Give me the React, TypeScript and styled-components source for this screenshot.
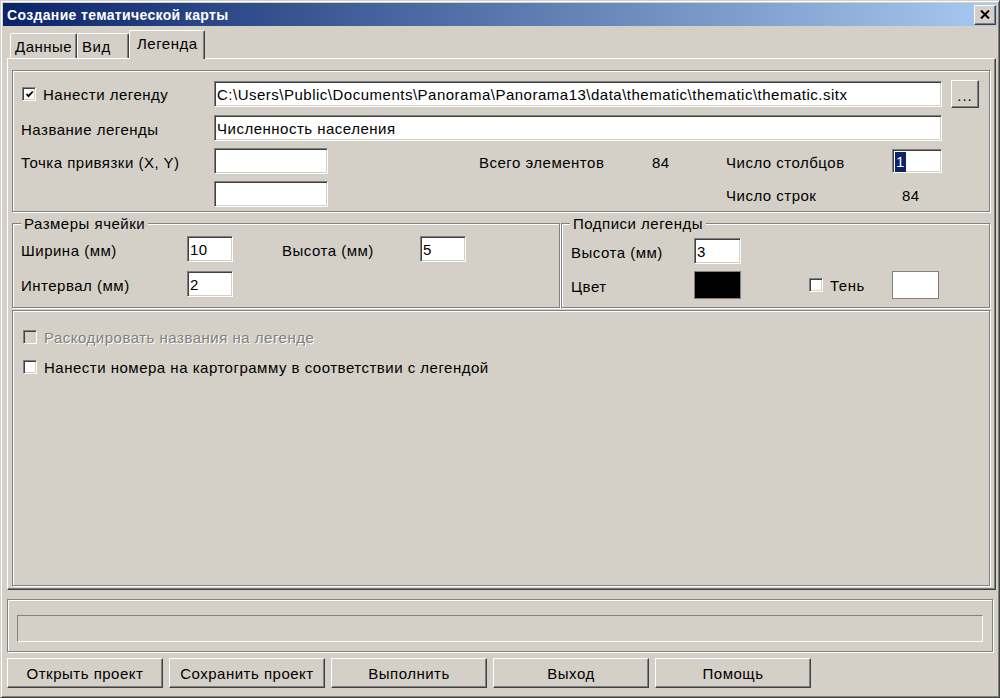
import React from "react";
import styled, { createGlobalStyle } from "styled-components";

const GlobalStyle = createGlobalStyle`
  html, body {
    margin: 0;
    padding: 0;
    background: #d4d0c8;
  }
  body {
    font-family: "Liberation Sans", Arial, sans-serif;
    font-size: 15px;
    letter-spacing: 0.5px;
    color: #000;
  }
  * {
    box-sizing: border-box;
  }
`;

const Window = styled.div`
  width: 1000px;
  height: 698px;
  display: flex;
  flex-direction: column;
  padding: 2px;
  background: #d4d0c8;
  border: 1px solid;
  border-color: #d4d0c8 #404040 #404040 #d4d0c8;
  box-shadow: inset 1px 1px #fff, inset -1px -1px #808080;
`;

const TitleBar = styled.div`
  height: 23px;
  flex: none;
  display: flex;
  align-items: center;
  padding-left: 4px;
  background: linear-gradient(to right, #0a246a, #a6caf0);
  color: #fff;
  font-weight: bold;
  font-size: 14px;
  letter-spacing: 0.35px;
`;

const CloseButton = styled.div`
  margin-left: auto;
  margin-right: 1px;
  width: 22px;
  height: 20px;
  display: flex;
  align-items: center;
  justify-content: center;
  background: #d4d0c8;
  border: 1px solid;
  border-color: #fff #404040 #404040 #fff;
  box-shadow: inset -1px -1px #808080;
`;

const Content = styled.div`
  flex: 1;
  display: flex;
  flex-direction: column;
  padding: 4px 1px 7px 4px;
`;

const TabStrip = styled.div`
  height: 28px;
  flex: none;
  display: flex;
  align-items: flex-end;
  padding-left: 3px;
`;

const Tab = styled.div<{ $active?: boolean; $w: number }>`
  width: ${(p) => p.$w}px;
  height: ${(p) => (p.$active ? 29 : 25)}px;
  margin-bottom: ${(p) => (p.$active ? -1 : 0)}px;
  position: relative;
  z-index: ${(p) => (p.$active ? 1 : 0)};
  display: flex;
  align-items: center;
  padding: ${(p) => (p.$active ? "0 0 3px 7px" : "1px 0 0 4px")};
  background: #d4d0c8;
  border: 1px solid;
  border-bottom: none;
  border-color: #fff #404040 transparent #fff;
  border-radius: 2px 2px 0 0;
  box-shadow: inset -1px 0 #808080;
`;

const Panel = styled.div`
  flex: 1;
  display: flex;
  flex-direction: column;
  padding: 11px 5px 3px 4px;
  border: 1px solid;
  border-color: #fff #404040 #404040 #fff;
  box-shadow: inset -1px -1px #808080;
`;

const Group = styled.div`
  position: relative;
  border: 1px solid #808080;
  box-shadow: inset 1px 1px #fff, 1px 1px #fff;
`;

const Caption = styled.span`
  position: absolute;
  top: -9px;
  left: 8px;
  padding: 0 3px;
  line-height: 17px;
  background: #d4d0c8;
`;

const TopGroup = styled(Group)`
  height: 142px;
  flex: none;
  display: grid;
  grid-template-columns: 193px 114px 151px 173px 74px 166px 50px 9px 28px;
  grid-template-rows: 28px 26px 26px 26px;
  row-gap: 7px;
  align-items: center;
  padding: 9px 0 0 8px;
`;

const GroupsRow = styled.div`
  margin-top: 11px;
  height: 85px;
  flex: none;
  display: flex;
  gap: 1px;
`;

const SizeGroup = styled(Group)`
  width: 548px;
  display: grid;
  grid-template-columns: 166px 46px 49px 138px 46px;
  grid-template-rows: 26px 26px;
  row-gap: 9px;
  align-items: center;
  align-content: start;
  padding: 12px 0 0 8px;
`;

const LabelsGroup = styled(Group)`
  flex: 1;
  display: grid;
  grid-template-columns: 123px 47px 67px 84px 47px;
  grid-template-rows: 26px 28px;
  row-gap: 7px;
  align-items: center;
  align-content: start;
  padding: 14px 0 0 9px;
`;

const OptionsGroup = styled(Group)`
  margin-top: 2px;
  flex: 1;
  display: flex;
  flex-direction: column;
  gap: 10px;
  padding: 16px 9px;
`;

const Cell = styled.div<{ $col?: string; $row?: number; $pad?: number }>`
  grid-column: ${(p) => p.$col ?? "auto"};
  grid-row: ${(p) => p.$row ?? "auto"};
  padding-left: ${(p) => p.$pad ?? 0}px;
  padding-top: 2px;
  white-space: nowrap;
`;

const Field = styled.div<{ $col?: string; $row?: number; $h?: number }>`
  grid-column: ${(p) => p.$col ?? "auto"};
  grid-row: ${(p) => p.$row ?? "auto"};
  height: ${(p) => p.$h ?? 26}px;
  display: flex;
  align-items: center;
  padding: 1px 2px 0;
  background: #fff;
  border: 1px solid;
  border-color: #808080 #fff #fff #808080;
  box-shadow: inset 1px 1px #404040, inset -1px -1px #d4d0c8;
  white-space: nowrap;
  overflow: hidden;
`;

const Selected = styled.span`
  background: #0a246a;
  color: #fff;
  padding: 0 1px;
  line-height: 20px;
`;

const Swatch = styled.div<{ $color: string; $col: string; $row: number }>`
  grid-column: ${(p) => p.$col};
  grid-row: ${(p) => p.$row};
  height: 28px;
  background: ${(p) => p.$color};
  border: 1px solid #808080;
`;

const SmallButton = styled.div<{ $col: string; $row: number }>`
  grid-column: ${(p) => p.$col};
  grid-row: ${(p) => p.$row};
  height: 28px;
  display: flex;
  align-items: center;
  justify-content: center;
  padding-top: 3px;
  letter-spacing: 1px;
  background: #d4d0c8;
  border: 1px solid;
  border-color: #fff #404040 #404040 #fff;
  box-shadow: inset -1px -1px #808080;
`;

const CheckLabel = styled.label<{ $col?: string; $row?: number; $disabled?: boolean }>`
  grid-column: ${(p) => p.$col ?? "auto"};
  grid-row: ${(p) => p.$row ?? "auto"};
  height: 20px;
  display: flex;
  align-items: center;
  gap: 7px;
  padding-left: 1px;
  white-space: nowrap;
  color: ${(p) => (p.$disabled ? "#808080" : "#000")};
  text-shadow: ${(p) => (p.$disabled ? "1px 1px #fff" : "none")};
`;

const Box = styled.span<{ $disabled?: boolean }>`
  width: 14px;
  height: 14px;
  flex: none;
  display: flex;
  align-items: center;
  justify-content: center;
  background: ${(p) => (p.$disabled ? "#d4d0c8" : "#fff")};
  border: 1px solid;
  border-color: #808080 #fff #fff #808080;
  box-shadow: inset 1px 1px #404040, inset -1px -1px #d4d0c8;
`;

const ProgressGroup = styled(Group)`
  margin: 9px 3px 0 0;
  height: 53px;
  flex: none;
  padding: 15px 9px 0 9px;
`;

const ProgressTrack = styled.div`
  height: 27px;
  border: 1px solid;
  border-color: #808080 #fff #fff #808080;
`;

const ButtonRow = styled.div`
  margin-top: 6px;
  height: 30px;
  flex: none;
  display: flex;
  gap: 6px;
`;

const Button = styled.div`
  width: 156px;
  display: flex;
  align-items: center;
  justify-content: center;
  padding-top: 1px;
  background: #d4d0c8;
  border: 1px solid;
  border-color: #fff #404040 #404040 #fff;
  box-shadow: inset -1px -1px #808080;
`;

const Check = ({
  checked,
  disabled,
  label,
  col,
  row,
}: {
  checked?: boolean;
  disabled?: boolean;
  label: string;
  col?: string;
  row?: number;
}) => (
  <CheckLabel $col={col} $row={row} $disabled={disabled}>
    <Box $disabled={disabled}>
      {checked && (
        <svg width="9" height="9" viewBox="0 0 9 9">
          <path d="M1.5 4 L3.5 6.2 L7.8 1.5" stroke="#000" strokeWidth="1.8" fill="none" />
        </svg>
      )}
    </Box>
    <span>{label}</span>
  </CheckLabel>
);

export default function App() {
  return (
    <>
      <GlobalStyle />
      <Window>
        <TitleBar>
          Создание тематической карты
          <CloseButton>
            <svg width="10" height="9" viewBox="0 0 10 9">
              <path d="M1 0.5 L9 8.5 M9 0.5 L1 8.5" stroke="#000" strokeWidth="2" />
            </svg>
          </CloseButton>
        </TitleBar>
        <Content>
          <TabStrip>
            <Tab $w={67}>Данные</Tab>
            <Tab $w={52}>Вид</Tab>
            <Tab $w={76} $active>
              Легенда
            </Tab>
          </TabStrip>
          <Panel>
            <TopGroup>
              <Check checked label="Нанести легенду" col="1" row={1} />
              <Field $col="2 / 8" $row={1}>
                C:\Users\Public\Documents\Panorama\Panorama13\data\thematic\thematic\thematic.sitx
              </Field>
              <SmallButton $col="9" $row={1}>...</SmallButton>

              <Cell $col="1" $row={2}>Название легенды</Cell>
              <Field $col="2 / 8" $row={2}>Численность населения</Field>

              <Cell $col="1" $row={3}>Точка привязки (X, Y)</Cell>
              <Field $col="2" $row={3} />
              <Cell $col="4" $row={3}>Всего элементов</Cell>
              <Cell $col="5" $row={3}>84</Cell>
              <Cell $col="6" $row={3}>Число столбцов</Cell>
              <Field $col="7" $row={3} $h={24}>
                <Selected>1</Selected>
              </Field>

              <Field $col="2" $row={4} />
              <Cell $col="6" $row={4}>Число строк</Cell>
              <Cell $col="7" $row={4} $pad={10}>84</Cell>
            </TopGroup>

            <GroupsRow>
              <SizeGroup>
                <Caption>Размеры ячейки</Caption>
                <Cell $col="1" $row={1}>Ширина (мм)</Cell>
                <Field $col="2" $row={1}>10</Field>
                <Cell $col="4" $row={1}>Высота (мм)</Cell>
                <Field $col="5" $row={1}>5</Field>
                <Cell $col="1" $row={2}>Интервал (мм)</Cell>
                <Field $col="2" $row={2}>2</Field>
              </SizeGroup>
              <LabelsGroup>
                <Caption>Подписи легенды</Caption>
                <Cell $col="1" $row={1}>Высота (мм)</Cell>
                <Field $col="2" $row={1}>3</Field>
                <Cell $col="1" $row={2}>Цвет</Cell>
                <Swatch $color="#000" $col="2" $row={2} />
                <Check label="Тень" col="4" row={2} />
                <Swatch $color="#fff" $col="5" $row={2} />
              </LabelsGroup>
            </GroupsRow>

            <OptionsGroup>
              <Check disabled label="Раскодировать названия на легенде" />
              <Check label="Нанести номера на картограмму в соответствии с легендой" />
            </OptionsGroup>
          </Panel>

          <ProgressGroup>
            <ProgressTrack />
          </ProgressGroup>

          <ButtonRow>
            <Button>Открыть проект</Button>
            <Button>Сохранить проект</Button>
            <Button>Выполнить</Button>
            <Button>Выход</Button>
            <Button>Помощь</Button>
          </ButtonRow>
        </Content>
      </Window>
    </>
  );
}
